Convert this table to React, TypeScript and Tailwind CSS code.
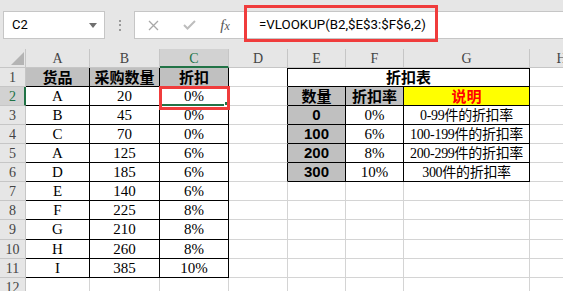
import React from "react";

type Side = "g" | "k";

const RIGHT: Record<Side, string> = { g: "border-r-[#d4d4d4]", k: "border-r-black" };
const BOTTOM: Record<Side, string> = { g: "border-b-[#d4d4d4]", k: "border-b-black" };

const CELL_FONT = "font-['Liberation_Serif','Noto_Sans_CJK_SC',serif] text-[15px]";
const NOTE_FONT = "font-['Liberation_Serif','Noto_Sans_CJK_SC',serif] text-[14px] tracking-[-0.3px]";
const HEAD_FONT = "font-['Noto_Sans_CJK_SC',sans-serif] font-bold text-[15px]";
const NUM_FONT = "font-['Liberation_Sans',sans-serif] font-bold text-[15px]";

function Cell({
  children,
  r = "g",
  b = "g",
  className = "",
}: {
  children?: React.ReactNode;
  r?: Side;
  b?: Side;
  className?: string;
}) {
  return (
    <div
      className={`flex items-center justify-center overflow-hidden whitespace-nowrap border-r border-b text-black ${RIGHT[r]} ${BOTTOM[b]} ${className}`}
    >
      {children}
    </div>
  );
}

function ColHead({ label, active = false }: { label: string; active?: boolean }) {
  return active ? (
    <div className="flex items-center justify-center border-r border-r-[#c6c6c6] border-b-2 border-b-[#217346] bg-[#d2d2d2] pt-[1px] text-[14px] text-[#217346]">
      {label}
    </div>
  ) : (
    <div className="flex items-center justify-center border-r border-b border-r-[#c6c6c6] border-b-[#c6c6c6] bg-[#e6e6e6] text-[14px] text-[#444]">
      {label}
    </div>
  );
}

function RowHead({ n, active = false }: { n: number; active?: boolean }) {
  return active ? (
    <div className="flex items-center justify-center border-r-2 border-b border-r-[#217346] border-b-[#c6c6c6] bg-[#d2d2d2] pl-[1px] text-[14px] text-[#217346]">
      {n}
    </div>
  ) : (
    <div className="flex items-center justify-center border-r border-b border-r-[#c6c6c6] border-b-[#c6c6c6] bg-[#e6e6e6] text-[14px] text-[#444]">
      {n}
    </div>
  );
}

const purchases: [string, string, string][] = [
  ["A", "20", "0%"],
  ["B", "45", "0%"],
  ["C", "70", "0%"],
  ["A", "125", "6%"],
  ["D", "185", "6%"],
  ["E", "140", "6%"],
  ["F", "225", "8%"],
  ["G", "210", "8%"],
  ["H", "260", "8%"],
  ["I", "385", "10%"],
];

const rates: [string, string, string][] = [
  ["0", "0%", "0-99件的折扣率"],
  ["100", "6%", "100-199件的折扣率"],
  ["200", "8%", "200-299件的折扣率"],
  ["300", "10%", "300件的折扣率"],
];

const columns = ["A", "B", "C", "D", "E", "F", "G", "H"];

export default function App() {
  const rows: React.ReactNode[] = [];

  // Row 1: headers of the purchase list and the merged title of the rate table
  rows.push(
    <React.Fragment key="r1">
      <RowHead n={1} />
      <Cell r="k" b="k" className={`bg-[#c0c0c0] ${HEAD_FONT}`}>货品</Cell>
      <Cell r="k" b="k" className={`bg-[#c0c0c0] ${HEAD_FONT}`}>采购数量</Cell>
      <Cell r="k" b="k" className={`bg-[#c0c0c0] ${HEAD_FONT}`}>折扣</Cell>
      <Cell r="k" />
      <Cell r="k" b="k" className={`col-span-3 border-t border-t-black ${HEAD_FONT}`}>
        折扣表
      </Cell>
      <Cell />
    </React.Fragment>
  );

  for (let i = 0; i < 11; i++) {
    const rowNo = i + 2;
    const p = purchases[i];
    const inTable = rowNo <= 6;
    rows.push(
      <React.Fragment key={`r${rowNo}`}>
        <RowHead n={rowNo} active={rowNo === 2} />
        {p ? (
          <>
            <Cell r="k" b="k" className={CELL_FONT}>{p[0]}</Cell>
            <Cell r="k" b="k" className={CELL_FONT}>{p[1]}</Cell>
            <Cell r="k" b="k" className={CELL_FONT}>{p[2]}</Cell>
          </>
        ) : (
          <>
            <Cell />
            <Cell />
            <Cell />
          </>
        )}
        <Cell r={inTable ? "k" : "g"} />
        {rowNo === 2 ? (
          <>
            <Cell r="k" b="k" className={`bg-[#c0c0c0] ${HEAD_FONT}`}>数量</Cell>
            <Cell r="k" b="k" className={`bg-[#c0c0c0] ${HEAD_FONT}`}>折扣率</Cell>
            <Cell r="k" b="k" className={`bg-[#ffff00] ${HEAD_FONT}`}>
              <span className="text-[#ff0000]">说明</span>
            </Cell>
          </>
        ) : inTable ? (
          <>
            <Cell r="k" b="k" className={`bg-[#c0c0c0] ${NUM_FONT}`}>{rates[rowNo - 3][0]}</Cell>
            <Cell r="k" b="k" className={CELL_FONT}>{rates[rowNo - 3][1]}</Cell>
            <Cell r="k" b="k" className={NOTE_FONT}>{rates[rowNo - 3][2]}</Cell>
          </>
        ) : (
          <>
            <Cell />
            <Cell />
            <Cell />
          </>
        )}
        <Cell />
      </React.Fragment>
    );
  }

  return (
    <div className="relative h-[291px] w-[563px] overflow-hidden bg-white">
      {/* Name box and formula bar */}
      <div className="flex h-[49px] items-start bg-[#e6e6e6] pt-[11px]">
        <div className="ml-[3px] flex h-[28px] w-[102px] items-center justify-between border border-[#c6c6c6] bg-white pl-[8px] pr-[7px] font-['Roboto',sans-serif] text-[13px] text-black">
          <span>C2</span>
          <svg width="8" height="5" viewBox="0 0 8 5">
            <polygon points="0,0 8,0 4,5" fill="#6f6f6f" />
          </svg>
        </div>
        <div className="flex h-[28px] w-[29px] flex-col items-center justify-center gap-[2.5px]">
          <span className="h-[2px] w-[2px] bg-[#9a9a9a]" />
          <span className="h-[2px] w-[2px] bg-[#9a9a9a]" />
          <span className="h-[2px] w-[2px] bg-[#9a9a9a]" />
        </div>
        <div className="flex h-[28px] flex-1 items-center border border-r-0 border-[#c6c6c6] bg-white">
          <div className="flex h-full w-[36px] items-center justify-center">
            <svg width="11" height="11" viewBox="0 0 11 11">
              <path d="M1 1 L10 10 M10 1 L1 10" stroke="#a8a8a8" strokeWidth="1.3" />
            </svg>
          </div>
          <div className="flex h-full w-[36px] items-center justify-center">
            <svg width="13" height="10" viewBox="0 0 13 10">
              <path d="M1 5 L4.5 8.5 L12 1" stroke="#bdbdbd" strokeWidth="2" fill="none" />
            </svg>
          </div>
          <div className="flex h-full w-[36px] items-center justify-center font-['Liberation_Serif',serif] text-[15px] italic text-[#555]">
            <span>
              f<span className="text-[12px]">x</span>
            </span>
          </div>
          <div className="pl-[16px] font-['Roboto',sans-serif] text-[13.3px] text-black">
            =VLOOKUP(B2,$E$3:$F$6,2)
          </div>
        </div>
      </div>

      {/* Worksheet grid */}
      <div className="grid grid-cols-[26px_64px_70px_69px_59px_58px_58px_126px_64px] grid-rows-[19px_19px_19px_19px_19px_19px_19px_19px_19px_20px_19px_19px_19px_19px] font-['Liberation_Serif','Noto_Sans_CJK_SC',serif]">
        <div className="flex items-end justify-end border-r border-b border-r-[#c6c6c6] border-b-[#c6c6c6] bg-[#e6e6e6] pb-[2px] pr-[1px]">
          <svg width="13" height="13" viewBox="0 0 13 13">
            <polygon points="13,0 13,13 0,13" fill="#b4b4b4" />
          </svg>
        </div>
        {columns.map((c) => (
          <ColHead key={c} label={c} active={c === "C"} />
        ))}
        {rows}
      </div>

      {/* Active cell selection on C2 */}
      <div className="absolute left-[159px] top-[86px] h-[20px] w-[70px] border-2 border-[#217346]" />
      <div className="absolute left-[224px] top-[101px] h-[5px] w-[5px] border border-white bg-[#217346]" />

      {/* Highlight frames */}
      <div className="absolute left-[159px] top-[86px] h-[24px] w-[71px] border-[3px] border-[#f03c3c]" />
      <div className="absolute left-[244px] top-[5px] h-[37px] w-[194px] border-[3px] border-[#f03c3c]" />
    </div>
  );
}
